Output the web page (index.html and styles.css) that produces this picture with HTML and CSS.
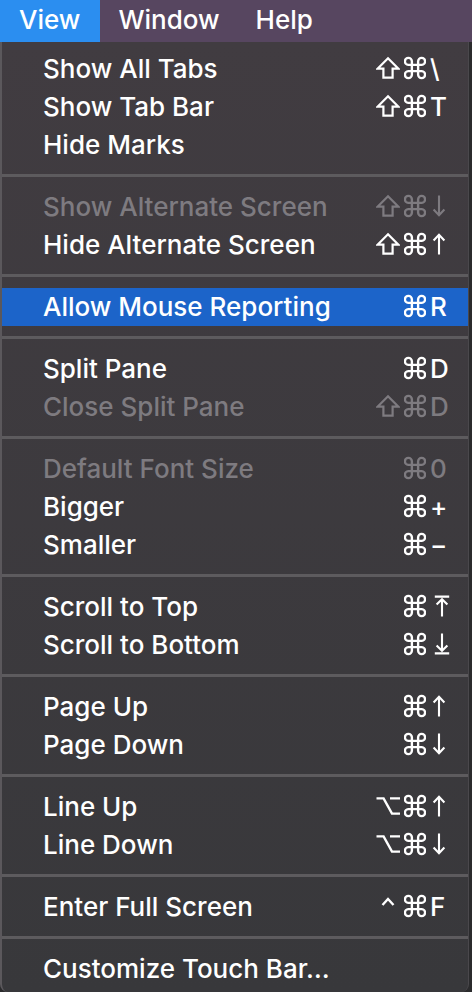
FILE: index.html
```html
<!DOCTYPE html>
<html>
<head>
<meta charset="utf-8">
<link rel="stylesheet" href="styles.css">
</head>
<body>
<svg width="0" height="0" class="defs">
  <defs>
    <symbol id="cmd" viewBox="0 0 24 24"><path d="M4.6 8.6H19.4A3.8 3.8 0 1 0 15.4 4.6V19.4A3.8 3.8 0 1 0 19.4 15.4H4.6A3.8 3.8 0 1 0 8.6 19.4V4.6A3.8 3.8 0 1 0 4.6 8.6Z" fill="none" stroke="currentColor" stroke-width="2.6" stroke-linejoin="round"/></symbol>
    <symbol id="shift" viewBox="0 0 24 24"><path d="M12 2.2L22.2 12.6H16.6V21.6H7.4V12.6H1.8Z" fill="none" stroke="currentColor" stroke-width="2.2" stroke-linejoin="miter"/></symbol>
    <symbol id="opt" viewBox="0 0 24 24"><path d="M0.5 4.4H7.6L16 19.6H24M14 4.4H24" fill="none" stroke="currentColor" stroke-width="2.4"/></symbol>
    <symbol id="ctrl" viewBox="0 0 24 24"><path d="M6.5 11L12 5L17.5 11" fill="none" stroke="currentColor" stroke-width="2.4"/></symbol>
    <symbol id="up" viewBox="0 0 14 24"><path d="M7 2.6V22.5M1.6 8.4L7 2.8L12.4 8.4" fill="none" stroke="currentColor" stroke-width="2.1"/></symbol>
    <symbol id="down" viewBox="0 0 14 24"><path d="M7 1.5V21.4M1.6 15.6L7 21.2L12.4 15.6" fill="none" stroke="currentColor" stroke-width="2.1"/></symbol>
    <symbol id="top" viewBox="0 0 16 24"><path d="M0.8 2.6H15.2M8 5V22.5M2.6 10.6L8 5.2L13.4 10.6" fill="none" stroke="currentColor" stroke-width="2.1"/></symbol>
    <symbol id="bottom" viewBox="0 0 16 24"><path d="M0.8 21.4H15.2M8 1.5V19M2.6 13.4L8 18.8L13.4 13.4" fill="none" stroke="currentColor" stroke-width="2.1"/></symbol>
  </defs>
</svg>
<div class="menubar">
  <div class="mb-item active">View</div>
  <div class="mb-item">Window</div>
  <div class="mb-item">Help</div>
</div>
<div class="menu">
  <div class="row"><span class="label">Show All Tabs</span><span class="mods"><svg class="ic w24"><use href="#shift"/></svg><svg class="ic w22"><use href="#cmd"/></svg></span><span class="key">\</span></div>
  <div class="row"><span class="label">Show Tab Bar</span><span class="mods"><svg class="ic w24"><use href="#shift"/></svg><svg class="ic w22"><use href="#cmd"/></svg></span><span class="key">T</span></div>
  <div class="row"><span class="label">Hide Marks</span><span class="mods"></span><span class="key"></span></div>
  <div class="sep"></div>
  <div class="row disabled"><span class="label">Show Alternate Screen</span><span class="mods"><svg class="ic w24"><use href="#shift"/></svg><svg class="ic w22"><use href="#cmd"/></svg></span><span class="key"><svg class="arr"><use href="#down"/></svg></span></div>
  <div class="row"><span class="label">Hide Alternate Screen</span><span class="mods"><svg class="ic w24"><use href="#shift"/></svg><svg class="ic w22"><use href="#cmd"/></svg></span><span class="key"><svg class="arr"><use href="#up"/></svg></span></div>
  <div class="sep"></div>
  <div class="row selected"><span class="label">Allow Mouse Reporting</span><span class="mods"><svg class="ic w22"><use href="#cmd"/></svg></span><span class="key">R</span></div>
  <div class="sep"></div>
  <div class="row"><span class="label">Split Pane</span><span class="mods"><svg class="ic w22"><use href="#cmd"/></svg></span><span class="key">D</span></div>
  <div class="row disabled"><span class="label">Close Split Pane</span><span class="mods"><svg class="ic w24"><use href="#shift"/></svg><svg class="ic w22"><use href="#cmd"/></svg></span><span class="key">D</span></div>
  <div class="sep"></div>
  <div class="row disabled"><span class="label">Default Font Size</span><span class="mods"><svg class="ic w22"><use href="#cmd"/></svg></span><span class="key">0</span></div>
  <div class="row"><span class="label">Bigger</span><span class="mods"><svg class="ic w22"><use href="#cmd"/></svg></span><span class="key">+</span></div>
  <div class="row"><span class="label">Smaller</span><span class="mods"><svg class="ic w22"><use href="#cmd"/></svg></span><span class="key">−</span></div>
  <div class="sep"></div>
  <div class="row"><span class="label">Scroll to Top</span><span class="mods"><svg class="ic w22"><use href="#cmd"/></svg></span><span class="key"><svg class="arr wide"><use href="#top"/></svg></span></div>
  <div class="row"><span class="label">Scroll to Bottom</span><span class="mods"><svg class="ic w22"><use href="#cmd"/></svg></span><span class="key"><svg class="arr wide"><use href="#bottom"/></svg></span></div>
  <div class="sep"></div>
  <div class="row"><span class="label">Page Up</span><span class="mods"><svg class="ic w22"><use href="#cmd"/></svg></span><span class="key"><svg class="arr"><use href="#up"/></svg></span></div>
  <div class="row"><span class="label">Page Down</span><span class="mods"><svg class="ic w22"><use href="#cmd"/></svg></span><span class="key"><svg class="arr"><use href="#down"/></svg></span></div>
  <div class="sep"></div>
  <div class="row"><span class="label">Line Up</span><span class="mods"><svg class="ic w24"><use href="#opt"/></svg><svg class="ic w22"><use href="#cmd"/></svg></span><span class="key"><svg class="arr"><use href="#up"/></svg></span></div>
  <div class="row"><span class="label">Line Down</span><span class="mods"><svg class="ic w24"><use href="#opt"/></svg><svg class="ic w22"><use href="#cmd"/></svg></span><span class="key"><svg class="arr"><use href="#down"/></svg></span></div>
  <div class="sep"></div>
  <div class="row"><span class="label">Enter Full Screen</span><span class="mods"><svg class="ic w24"><use href="#ctrl"/></svg><svg class="ic w22"><use href="#cmd"/></svg></span><span class="key">F</span></div>
  <div class="sep"></div>
  <div class="row"><span class="label">Customize Touch Bar…</span><span class="mods"></span><span class="key"></span></div>
</div>
</body>
</html>
```
FILE: styles.css
```css
html, body {
  margin: 0;
  padding: 0;
  background: #2b2b2d;
  width: 472px;
  height: 992px;
  overflow: hidden;
  font-family: Inter, "Noto Sans", "DejaVu Sans", sans-serif;
  -webkit-font-smoothing: antialiased;
}
.defs {
  position: absolute;
  width: 0;
  height: 0;
}
.menubar {
  height: 42px;
  background: #574660;
  display: flex;
  align-items: center;
  color: #ffffff;
  font-size: 26px;
  font-weight: 500;
}
.mb-item {
  height: 42px;
  line-height: 40px;
  padding: 0 18px 0 18px;
}
.mb-item.active {
  background: #2b8ef0;
  padding: 0 20px 0 19px;
}
.menu {
  width: 469px;
  height: 950px;
  box-sizing: border-box;
  background: linear-gradient(#413c41, #38383b);
  border-left: 2px solid #5b585c;
  border-right: 1px solid #4a484c;
  border-radius: 0 0 8px 8px;
  padding-top: 8px;
  color: #ffffff;
  font-size: 26px;
  font-weight: 500;
}
.row {
  height: 38px;
  box-sizing: border-box;
  display: grid;
  grid-template-columns: 1fr auto 22px;
  align-items: center;
  padding: 0 16px 2px 41px;
}
.row.selected {
  background: #1c64c9;
}
.row.disabled {
  color: #7e7b80;
}
.label {
  white-space: nowrap;
}
.mods {
  display: flex;
  align-items: center;
  justify-content: flex-end;
  gap: 4px;
  padding-right: 4px;
}
.ic {
  display: block;
  height: 24px;
}
.w24 {
  width: 24px;
}
.w22 {
  width: 22px;
}
.key {
  display: flex;
  align-items: center;
}
.arr {
  display: block;
  width: 14px;
  height: 24px;
  margin-left: 2px;
}
.arr.wide {
  width: 16px;
  margin-left: 4px;
}
.sep {
  height: 24px;
  box-sizing: border-box;
  padding-top: 10px;
}
.sep::before {
  content: "";
  display: block;
  height: 3px;
  background: #5d5b5e;
}
```
